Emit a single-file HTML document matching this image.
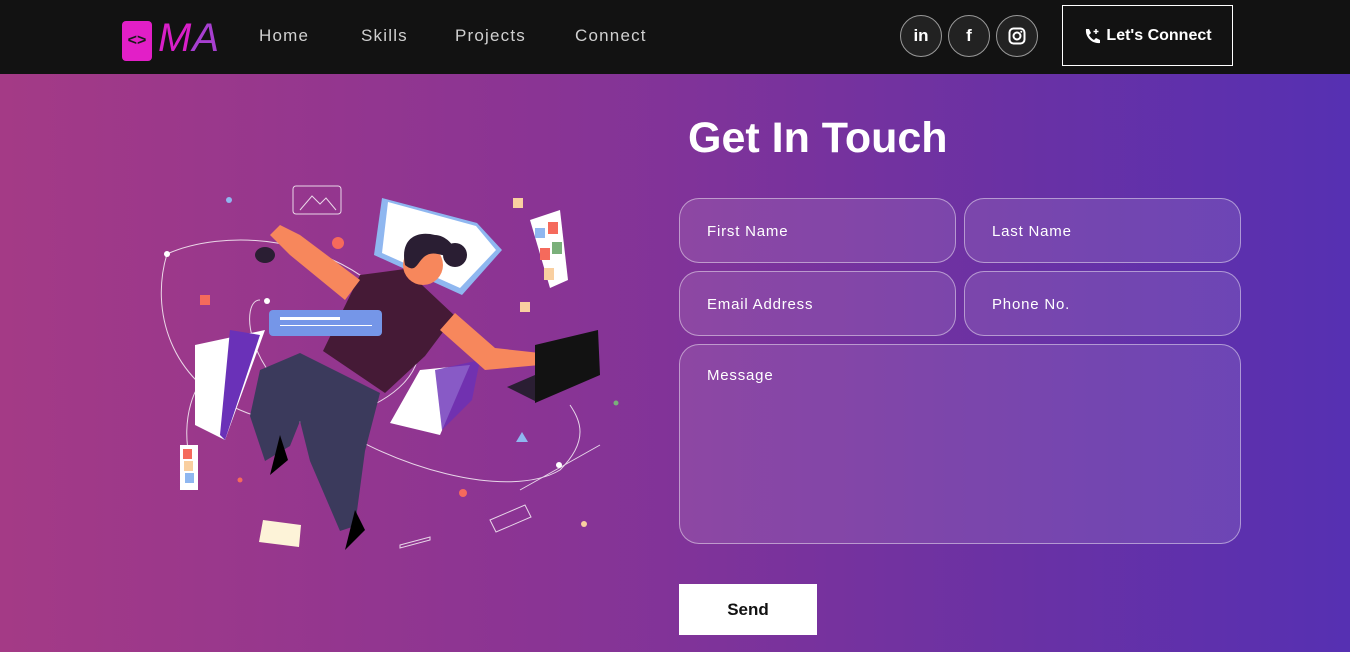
<!DOCTYPE html>
<html><head><meta charset="utf-8"><style>
*{margin:0;padding:0;box-sizing:border-box}
body{width:1350px;height:652px;overflow:hidden;font-family:"Liberation Sans",sans-serif;background:linear-gradient(90deg,#a43a86 0%,#8a3494 40%,#6a31a4 75%,#5630b2 100%);position:relative}
nav{position:absolute;left:0;top:0;width:1350px;height:74px;background:#121212}
.logo{position:absolute;left:122px;top:21px;width:30px;height:40px;background:#e21fc7;border-radius:4px;color:#1a1a1a;font-weight:bold;font-size:16px;text-align:center;line-height:40px}
.ma{position:absolute;left:158px;top:16px;font-size:40px;font-style:italic;color:#d81fc8;letter-spacing:1px;font-family:"Liberation Sans",sans-serif;line-height:44px}
.ma span{color:#a73fd0}
.nl{position:absolute;top:26px;color:#d0d0d0;font-size:17px;letter-spacing:1.2px}
.soc{position:absolute;top:15px;width:42px;height:42px;border-radius:50%;border:1px solid #999;background:#222;color:#fff;display:flex;align-items:center;justify-content:center;font-weight:bold;font-size:17px}
.btn{position:absolute;left:1062px;top:5px;width:171px;height:61px;border:1px solid #fff;color:#fff;font-weight:bold;font-size:16px;display:flex;align-items:center;justify-content:center;gap:5px}
h1{position:absolute;left:688px;top:114px;color:#fff;font-size:43px;font-weight:bold}
.f{position:absolute;border:1px solid rgba(255,255,255,.45);background:rgba(255,255,255,.1);border-radius:20px;color:#fff;font-size:15px;letter-spacing:.8px;padding-left:27px}
.send{position:absolute;left:679px;top:584px;width:138px;height:51px;background:#fff;color:#111;font-weight:bold;font-size:17px;display:flex;align-items:center;justify-content:center}
</style></head><body>
<nav>
<div class="logo">&lt;&gt;</div>
<div class="ma">M<span>A</span></div>
<div class="nl" style="left:259px">Home</div>
<div class="nl" style="left:361px">Skills</div>
<div class="nl" style="left:455px">Projects</div>
<div class="nl" style="left:575px">Connect</div>
<div class="soc" style="left:900px">in</div>
<div class="soc" style="left:948px">f</div>
<div class="soc" style="left:996px"><svg width="18" height="18" viewBox="0 0 18 18"><rect x="1.5" y="1.5" width="15" height="15" rx="4" fill="none" stroke="#fff" stroke-width="2"/><circle cx="9" cy="9" r="3.5" fill="none" stroke="#fff" stroke-width="2"/><circle cx="13.3" cy="4.7" r="1" fill="#fff"/></svg></div>
<div class="btn"><svg width="18" height="18" viewBox="0 0 18 18"><path d="M3 2l3 0 2 4-2 2c1 2 3 4 5 5l2-2 4 2v3c-8 1-15-6-14-14z" fill="#fff"/><path d="M13 2v5M10.5 4.5h5" stroke="#fff" stroke-width="1.5"/></svg>Let's Connect</div>
</nav>
<svg style="position:absolute;left:130px;top:170px" width="500" height="390" viewBox="0 0 500 390">
<g fill="none" stroke="#fff" stroke-width="1" opacity=".8">
<path d="M37 84C90 60 200 60 270 140C340 210 200 280 110 240C40 210 20 140 37 84"/>
<path d="M130 130C110 130 115 200 180 240C260 300 380 330 430 300C460 270 450 250 440 235"/>
<path d="M60 290C50 250 65 210 80 205M390 320L470 275"/>
<rect x="163" y="16" width="48" height="28" rx="3"/><path d="M170 40l12-14 8 8 6-6 10 12"/>
<path d="M360 350l35-15 6 12-35 15z"/><path d="M270 375l30-8v3l-30 8z"/>
</g>
<circle cx="37" cy="84" r="3" fill="#fff"/><circle cx="137" cy="131" r="3" fill="#fff"/><circle cx="175" cy="252" r="3" fill="#fff"/><circle cx="429" cy="295" r="3" fill="#fff"/>
<path d="M252 28l95 25 25 27-40 45-88-40z" fill="#8fb7f0"/><path d="M258 32l88 24 20 24-36 38-78-35z" fill="#fff"/>
<path d="M400 50l30-10 8 70-18 8z" fill="#fff"/><rect x="405" y="58" width="10" height="10" fill="#8fb7f0"/><rect x="418" y="52" width="10" height="12" fill="#f56a5c"/><rect x="410" y="78" width="10" height="12" fill="#f56a5c"/><rect x="422" y="72" width="10" height="12" fill="#7ab07a"/><rect x="414" y="98" width="10" height="12" fill="#f9cfa0"/>
<rect x="50" y="275" width="18" height="45" fill="#fff"/><rect x="53" y="279" width="9" height="10" fill="#f56a5c"/><rect x="54" y="291" width="9" height="10" fill="#f9cfa0"/><rect x="55" y="303" width="9" height="10" fill="#8fb7f0"/>
<path d="M65 175l70-15 -40 110-30-15z" fill="#fff"/><path d="M100 160l30 5-35 105 -5-5z" fill="#6a31b8"/>
<path d="M290 200l50 -5-30 70-50-12z" fill="#fff"/><path d="M305 200l45-10-8 40-30 30z" fill="#6a31b8" opacity=".8"/>
<path d="M133 350l38 5-2 22-40-5z" fill="#fdf3d8"/>
<path d="M130 200l40-17 80 40-15 58-10 75-15 5-30-70-10-40-10 25-25 15-15-45z" fill="#3b3a5c"/>
<path d="M230 105l45-6 50 47-30 40-40 37-62-42z" fill="#451a36"/>
<path d="M230 110l-60-45-20-10-10 10 20 20 55 45z" fill="#f7875c"/>
<path d="M310 160l45 40 55-5 0-12-45-5-40-35z" fill="#f7875c"/>
<circle cx="293" cy="95" r="20" fill="#f7875c"/>
<path d="M275 95c-5-25 10-35 30-30 10 0 20 10 22 20-10 5-20-5-30 0-10 5-10 20-22 10z" fill="#2a1e33"/><circle cx="325" cy="85" r="12" fill="#2a1e33"/>
<ellipse cx="135" cy="85" rx="10" ry="8" fill="#2a1e33"/>
<path d="M405 175l63-15 2 45-65 28z" fill="#121212"/><path d="M405 205l-28 12 28 14z" fill="#2a1e33"/>
<path d="M150 265l-10 40 18-15z M225 340l-10 40 20-20z" fill="#000"/>
<rect x="139" y="140" width="113" height="26" rx="4" fill="#7596e8"/><rect x="150" y="147" width="60" height="3" fill="#fff"/><rect x="150" y="155" width="92" height="1" fill="#fff"/>
<circle cx="208" cy="73" r="6" fill="#f56a5c"/><rect x="70" y="125" width="10" height="10" fill="#f56a5c"/><rect x="390" y="132" width="10" height="10" fill="#f9cfa0"/><rect x="383" y="28" width="10" height="10" fill="#f9cfa0"/>
<circle cx="333" cy="323" r="4" fill="#f56a5c"/><circle cx="110" cy="310" r="2.5" fill="#f56a5c"/><circle cx="454" cy="354" r="3" fill="#f9cfa0"/><circle cx="99" cy="30" r="3" fill="#8fb7f0"/><circle cx="486" cy="233" r="2.5" fill="#7ab07a"/>
<path d="M392 262l6 10h-12z" fill="#8fb7f0"/>
</svg>
<h1>Get In Touch</h1>
<div class="f" style="left:679px;top:198px;width:277px;height:65px;line-height:65px">First Name</div>
<div class="f" style="left:964px;top:198px;width:277px;height:65px;line-height:65px">Last Name</div>
<div class="f" style="left:679px;top:271px;width:277px;height:65px;line-height:65px">Email Address</div>
<div class="f" style="left:964px;top:271px;width:277px;height:65px;line-height:65px">Phone No.</div>
<div class="f" style="left:679px;top:344px;width:562px;height:200px;padding-top:22px">Message</div>
<div class="send">Send</div>
</body></html>
